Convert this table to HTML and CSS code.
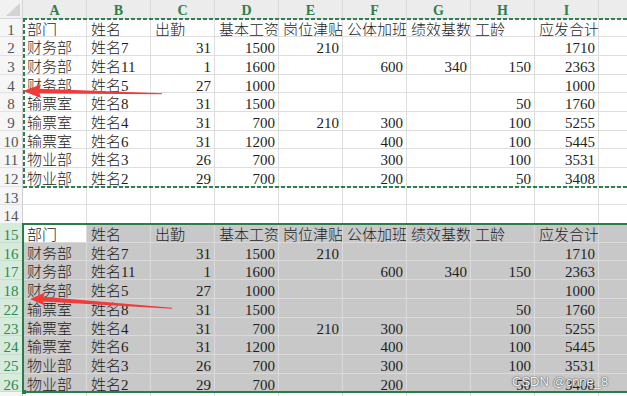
FILE: index.html
```html
<!DOCTYPE html>
<html lang="zh">
<head>
<meta charset="utf-8">
<link rel="stylesheet" href="styles.css">
</head>
<body>
<div class="wrap">
  <div class="sheet">
    <div class="row head">
      <div class="corner"><span class="tri"></span></div>
      <div class="ch">A</div><div class="ch">B</div><div class="ch">C</div><div class="ch">D</div><div class="ch">E</div><div class="ch">F</div><div class="ch">G</div><div class="ch">H</div><div class="ch">I</div><div class="ch"></div>
    </div>

    <div class="row">
      <div class="rh">1</div><div class="c">部门</div><div class="c">姓名</div><div class="c">出勤</div><div class="c">基本工资</div><div class="c">岗位津贴</div><div class="c">公体加班</div><div class="c">绩效基数</div><div class="c">工龄</div><div class="c">应发合计</div><div class="c"></div>
    </div>
    <div class="row">
      <div class="rh">2</div><div class="c">财务部</div><div class="c">姓名7</div><div class="c n">31</div><div class="c n">1500</div><div class="c n">210</div><div class="c"></div><div class="c"></div><div class="c"></div><div class="c n">1710</div><div class="c"></div>
    </div>
    <div class="row">
      <div class="rh">3</div><div class="c">财务部</div><div class="c">姓名11</div><div class="c n">1</div><div class="c n">1600</div><div class="c"></div><div class="c n">600</div><div class="c n">340</div><div class="c n">150</div><div class="c n">2363</div><div class="c"></div>
    </div>
    <div class="row">
      <div class="rh">4</div><div class="c">财务部</div><div class="c">姓名5</div><div class="c n">27</div><div class="c n">1000</div><div class="c"></div><div class="c"></div><div class="c"></div><div class="c"></div><div class="c n">1000</div><div class="c"></div>
    </div>
    <div class="row">
      <div class="rh">8</div><div class="c">输票室</div><div class="c">姓名8</div><div class="c n">31</div><div class="c n">1500</div><div class="c"></div><div class="c"></div><div class="c"></div><div class="c n">50</div><div class="c n">1760</div><div class="c"></div>
    </div>
    <div class="row">
      <div class="rh">9</div><div class="c">输票室</div><div class="c">姓名4</div><div class="c n">31</div><div class="c n">700</div><div class="c n">210</div><div class="c n">300</div><div class="c"></div><div class="c n">100</div><div class="c n">5255</div><div class="c"></div>
    </div>
    <div class="row">
      <div class="rh">10</div><div class="c">输票室</div><div class="c">姓名6</div><div class="c n">31</div><div class="c n">1200</div><div class="c"></div><div class="c n">400</div><div class="c"></div><div class="c n">100</div><div class="c n">5445</div><div class="c"></div>
    </div>
    <div class="row">
      <div class="rh">11</div><div class="c">物业部</div><div class="c">姓名3</div><div class="c n">26</div><div class="c n">700</div><div class="c"></div><div class="c n">300</div><div class="c"></div><div class="c n">100</div><div class="c n">3531</div><div class="c"></div>
    </div>
    <div class="row">
      <div class="rh">12</div><div class="c">物业部</div><div class="c">姓名2</div><div class="c n">29</div><div class="c n">700</div><div class="c"></div><div class="c n">200</div><div class="c"></div><div class="c n">50</div><div class="c n">3408</div><div class="c"></div>
    </div>
    <div class="row">
      <div class="rh">13</div><div class="c"></div><div class="c"></div><div class="c"></div><div class="c"></div><div class="c"></div><div class="c"></div><div class="c"></div><div class="c"></div><div class="c"></div><div class="c"></div>
    </div>
    <div class="row">
      <div class="rh">14</div><div class="c"></div><div class="c"></div><div class="c"></div><div class="c"></div><div class="c"></div><div class="c"></div><div class="c"></div><div class="c"></div><div class="c"></div><div class="c"></div>
    </div>

    <div class="row sel">
      <div class="rh">15</div><div class="c act">部门</div><div class="c">姓名</div><div class="c">出勤</div><div class="c">基本工资</div><div class="c">岗位津贴</div><div class="c">公体加班</div><div class="c">绩效基数</div><div class="c">工龄</div><div class="c">应发合计</div><div class="c"></div>
    </div>
    <div class="row sel">
      <div class="rh">16</div><div class="c">财务部</div><div class="c">姓名7</div><div class="c n">31</div><div class="c n">1500</div><div class="c n">210</div><div class="c"></div><div class="c"></div><div class="c"></div><div class="c n">1710</div><div class="c"></div>
    </div>
    <div class="row sel">
      <div class="rh">17</div><div class="c">财务部</div><div class="c">姓名11</div><div class="c n">1</div><div class="c n">1600</div><div class="c"></div><div class="c n">600</div><div class="c n">340</div><div class="c n">150</div><div class="c n">2363</div><div class="c"></div>
    </div>
    <div class="row sel">
      <div class="rh">18</div><div class="c">财务部</div><div class="c">姓名5</div><div class="c n">27</div><div class="c n">1000</div><div class="c"></div><div class="c"></div><div class="c"></div><div class="c"></div><div class="c n">1000</div><div class="c"></div>
    </div>
    <div class="row sel">
      <div class="rh">22</div><div class="c">输票室</div><div class="c">姓名8</div><div class="c n">31</div><div class="c n">1500</div><div class="c"></div><div class="c"></div><div class="c"></div><div class="c n">50</div><div class="c n">1760</div><div class="c"></div>
    </div>
    <div class="row sel">
      <div class="rh">23</div><div class="c">输票室</div><div class="c">姓名4</div><div class="c n">31</div><div class="c n">700</div><div class="c n">210</div><div class="c n">300</div><div class="c"></div><div class="c n">100</div><div class="c n">5255</div><div class="c"></div>
    </div>
    <div class="row sel">
      <div class="rh">24</div><div class="c">输票室</div><div class="c">姓名6</div><div class="c n">31</div><div class="c n">1200</div><div class="c"></div><div class="c n">400</div><div class="c"></div><div class="c n">100</div><div class="c n">5445</div><div class="c"></div>
    </div>
    <div class="row sel">
      <div class="rh">25</div><div class="c">物业部</div><div class="c">姓名3</div><div class="c n">26</div><div class="c n">700</div><div class="c"></div><div class="c n">300</div><div class="c"></div><div class="c n">100</div><div class="c n">3531</div><div class="c"></div>
    </div>
    <div class="row sel">
      <div class="rh">26</div><div class="c">物业部</div><div class="c">姓名2</div><div class="c n">29</div><div class="c n">700</div><div class="c"></div><div class="c n">200</div><div class="c"></div><div class="c n">50</div><div class="c n">3408</div><div class="c"></div>
    </div>
    <div class="row">
      <div class="rh"></div><div class="c"></div><div class="c"></div><div class="c"></div><div class="c"></div><div class="c"></div><div class="c"></div><div class="c"></div><div class="c"></div><div class="c"></div><div class="c"></div>
    </div>
  </div>

  <div class="copy-range"></div>
  <div class="sel-range"><span class="handle"></span></div>

  <svg class="arrows" width="627" height="396" viewBox="0 0 627 396">
    <polygon points="23,91 41,84.5 39.5,88.8 162,93.3 162,94.3 39.5,93.6 41,98" fill="#f23a3a"/>
    <polygon points="30,299 45,292.5 43.5,296.8 172,307.8 172,308.8 43,301.6 46,306" fill="#f23a3a"/>
  </svg>

  <div class="watermark">CSDN @cnne_8</div>
</div>
</body>
</html>
```

FILE: styles.css
```css
html, body {
  margin: 0;
  padding: 0;
  background: #ffffff;
  overflow: hidden;
}

.wrap {
  position: relative;
  width: 627px;
  height: 396px;
  overflow: hidden;
}

.sheet {
  display: grid;
  grid-template-columns: 23px repeat(9, 64px) 64px;
  grid-template-rows: 18.5px repeat(21, 18.7px);
  width: 663px;
  font-family: "Liberation Serif", "Noto Sans CJK SC", serif;
  font-size: 15px;
  font-weight: 300;
  color: #1e1e1e;
}

.row {
  display: contents;
}

.corner {
  position: relative;
  background: #f1f1f1;
  border-right: 1px solid #d6d6d6;
  border-bottom: 1px solid #d6d6d6;
}

.tri {
  position: absolute;
  right: 2px;
  bottom: 2px;
  width: 0;
  height: 0;
  border-left: 14px solid transparent;
  border-bottom: 13px solid #d3d3d3;
}

.ch {
  overflow: hidden;
  background: #ececec;
  border-right: 1px solid #d8d8d8;
  border-bottom: 1px solid #cfcfcf;
  color: #2f7d4a;
  font-weight: bold;
  font-size: 14px;
  line-height: 21.5px;
  text-align: center;
}

.rh {
  box-sizing: border-box;
  overflow: hidden;
  background: #f6f6f6;
  border-right: 1px solid #cfcfcf;
  border-bottom: 1px solid #e2e2e2;
  color: #555;
  text-align: center;
  line-height: 22.5px;
  font-size: 15px;
}

.c {
  box-sizing: border-box;
  border-right: 1px solid #dedede;
  border-bottom: 1px solid #dedede;
  padding: 0 3px 0 4px;
  line-height: 22.5px;
  white-space: nowrap;
  overflow: hidden;
}

.n {
  text-align: right;
  padding-right: 3px;
}

.sel .c {
  background: #c8c8c8;
  border-right-color: #dadada;
  border-bottom-color: #dadada;
}

.sel .c.act {
  background: #ffffff;
}

.sel .rh {
  background: #d6ebdc;
  color: #2e8a52;
  border-bottom-color: #c6dfcc;
}

.copy-range {
  position: absolute;
  left: 23px;
  top: 17.5px;
  width: 640px;
  height: 170px;
  background:
    repeating-linear-gradient(90deg, #2f8050 0 4px, transparent 4px 6px) left top / 100% 2px no-repeat,
    repeating-linear-gradient(90deg, #2f8050 0 4px, transparent 4px 6px) left bottom / 100% 2px no-repeat,
    repeating-linear-gradient(180deg, #2f8050 0 4px, transparent 4px 6px) left top / 2px 100% no-repeat;
}

.sel-range {
  position: absolute;
  left: 22px;
  top: 222.5px;
  width: 640px;
  height: 170px;
  box-sizing: border-box;
  border: 2px solid #2a7d4a;
}

.handle {
  position: absolute;
  left: -2px;
  bottom: -3px;
  width: 4px;
  height: 4px;
  background: #2a7d4a;
}

.arrows {
  position: absolute;
  left: 0;
  top: 0;
}

.watermark {
  position: absolute;
  left: 512px;
  top: 374px;
  font-family: "Liberation Sans", "Noto Sans CJK SC", sans-serif;
  font-size: 13px;
  color: #f6f6f6;
  text-shadow: 0 0 1.5px #444, 0 0 1px #555;
}
```
